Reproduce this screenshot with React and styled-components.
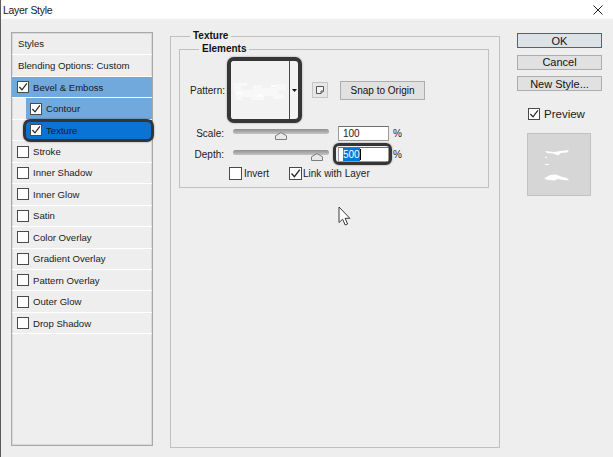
import React from "react";
import styled, { createGlobalStyle } from "styled-components";

const GlobalStyle = createGlobalStyle`
  html, body {
    margin: 0;
    padding: 0;
    background: #eeeeee;
  }
  body {
    font-family: "Liberation Sans", Arial, sans-serif;
    color: #1b1b1b;
  }
  #root {
    width: 613px;
    height: 457px;
  }
`;

const Window = styled.div`
  position: relative;
  width: 613px;
  height: 457px;
  box-sizing: border-box;
  border-left: 1px solid #5c5c5c;
  background: #eeeeee;
  display: flex;
  flex-direction: column;
  overflow: hidden;
`;

const TitleBar = styled.div`
  height: 19px;
  flex: none;
  background: #fff;
  display: flex;
  align-items: center;
  justify-content: space-between;
  padding: 0 10px 0 2px;
`;

const Title = styled.div`
  font-size: 10.5px;
  letter-spacing: -0.3px;
  color: #1a1a1a;
`;

const Body = styled.div`
  display: grid;
  grid-template-columns: 142px 330px 85px;
  column-gap: 17px;
  align-items: start;
  padding: 12px 0 0 10px;
`;

/* ---------- left list ---------- */

const StylesPanel = styled.div`
  margin-top: 1px;
  height: 414px;
  box-sizing: border-box;
  border: 1px solid #a9a9a9;
  box-shadow: inset 0 0 0 1px #d9d9d9;
`;

const Row = styled.div`
  height: ${(p) => p.$h || 21.45}px;
  box-sizing: border-box;
  border-bottom: 1px solid #fff;
  display: flex;
  font-size: 9.6px;
`;

const RowFill = styled.div`
  position: relative;
  flex: 1;
  display: flex;
  align-items: center;
  gap: 4px;
  margin-left: ${(p) => p.$indent || 0}px;
  padding-left: ${(p) => p.$pad}px;
  background: ${(p) =>
    p.$state === "sel" ? "#0b72d6" : p.$state === "on" ? "#72a9dd" : "transparent"};

  ${(p) =>
    p.$state === "sel" &&
    `
    &::after {
      content: "";
      position: absolute;
      top: -1px;
      bottom: -1.5px;
      left: -3px;
      right: -2px;
      border: 3px solid #353535;
      border-radius: 7px;
      box-shadow: 0 0 2px rgba(0, 0, 0, 0.4);
      pointer-events: none;
    }
  `}
`;

const CheckBox = styled.span`
  width: ${(p) => p.$size}px;
  height: ${(p) => p.$size}px;
  box-sizing: border-box;
  border: 1px solid #4a4a4a;
  background: #fff;
  display: inline-flex;
  align-items: center;
  justify-content: center;
  flex: none;
`;

function Check({ size = 12, checked }) {
  return (
    <CheckBox $size={size}>
      {checked && (
        <svg width={size - 2} height={size - 2} viewBox="0 0 10 10">
          <polyline points="1.4,5 4,7.9 8.9,1.4" fill="none" stroke="#262626" strokeWidth="1.2" />
        </svg>
      )}
    </CheckBox>
  );
}

const layers = [
  { name: "Bevel & Emboss", checked: true, state: "on" },
  { name: "Contour", checked: true, state: "on", sub: true },
  { name: "Texture", checked: true, state: "sel", sub: true },
  { name: "Stroke" },
  { name: "Inner Shadow" },
  { name: "Inner Glow" },
  { name: "Satin" },
  { name: "Color Overlay" },
  { name: "Gradient Overlay" },
  { name: "Pattern Overlay" },
  { name: "Outer Glow" },
  { name: "Drop Shadow" },
];

/* ---------- middle group ---------- */

const Group = styled.fieldset`
  margin: ${(p) => p.$m};
  padding: 0 0 ${(p) => p.$pb || 0}px 0;
  border: 1px solid #c0c0c0;
  min-width: 0;
  box-sizing: border-box;
  height: ${(p) => (p.$h ? `${p.$h}px` : "auto")};
`;

const Legend = styled.legend`
  font-weight: bold;
  font-size: 10px;
  line-height: 12px;
  padding: 0 3px;
  margin-left: 19px;
  color: #111;
`;

const PatternRow = styled.div`
  display: flex;
  align-items: center;
  height: 66px;
  margin-top: 2px;
  padding-left: 10px;
  font-size: 10px;
`;

const Label = styled.span`
  font-size: 10px;
  width: ${(p) => (p.$w ? `${p.$w}px` : "auto")};
  text-align: ${(p) => (p.$right ? "right" : "left")};
  flex: none;
`;

const SwatchFrame = styled.div`
  margin-left: 2px;
  width: 75px;
  height: 66px;
  box-sizing: border-box;
  border: 4px solid #363636;
  border-radius: 7px;
  box-shadow: 0 0 2px rgba(0, 0, 0, 0.4);
  display: flex;
  overflow: hidden;
  background: #f3f3f3;
`;

const SwatchPattern = styled.div`
  flex: 1;
  display: flex;
  border-right: 1px solid #4a4a4a;
`;

const SwatchArrow = styled.div`
  width: 8px;
  display: flex;
  align-items: center;
  justify-content: center;
`;

const IconButton = styled.div`
  margin-left: 10px;
  width: 16px;
  height: 16px;
  box-sizing: border-box;
  border: 1px solid #c6c6c6;
  background: #e6e6e6;
  display: flex;
  align-items: center;
  justify-content: center;
`;

const Button = styled.div`
  width: ${(p) => p.$w || 85}px;
  height: ${(p) => p.$h || 15}px;
  margin-left: ${(p) => p.$ml || 0}px;
  box-sizing: border-box;
  border: 1px solid ${(p) => (p.$primary ? "#0078d7" : "#adadad")};
  background: #e1e1e1;
  font-size: ${(p) => p.$fs || 11}px;
  color: #111;
  display: flex;
  align-items: center;
  justify-content: center;
  flex: none;
`;

const FieldRow = styled.div`
  display: flex;
  align-items: center;
  height: 16px;
  margin-top: ${(p) => p.$mt}px;
  padding-left: ${(p) => p.$pl || 0}px;
  font-size: 10px;
`;

const Slider = styled.div`
  position: relative;
  width: 96px;
  height: 16px;
  margin-left: 9px;
  flex: none;
`;

const Track = styled.div`
  margin-top: 4px;
  height: 5px;
  border-radius: 3px;
  background: linear-gradient(#8f8f8f, #c4c4c4);
`;

const Thumb = styled.svg`
  position: absolute;
  top: 7px;
  left: ${(p) => p.$at - 6}px;
`;

const NumField = styled.div`
  margin-left: 9px;
  width: 51px;
  height: 15px;
  box-sizing: border-box;
  border: 1px solid #9a9a9a;
  border-top-color: #6e6e6e;
  background: #fff;
  font-size: 10px;
  display: flex;
  align-items: center;
  padding-left: 4px;
  flex: none;
`;

const Highlight = styled.div`
  position: relative;
  display: flex;
  flex: none;

  &::after {
    content: "";
    position: absolute;
    top: -4px;
    bottom: -3px;
    left: 4px;
    right: -3px;
    border: 3px solid #353535;
    border-radius: 6px;
    box-shadow: 0 0 2px rgba(0, 0, 0, 0.4);
    pointer-events: none;
  }
`;

const Selected = styled.span`
  background: #0078d7;
  color: #fff;
  padding: 1px 0;
`;

const Caret = styled.span`
  width: 1px;
  height: 11px;
  background: #000;
`;

const Percent = styled.span`
  margin-left: 4px;
  font-size: 10px;
`;

const CheckLabel = styled.label`
  display: flex;
  align-items: center;
  gap: ${(p) => p.$gap || 2}px;
  margin-left: ${(p) => p.$ml || 0}px;
  font-size: ${(p) => p.$fs || 10}px;
`;

/* ---------- right column ---------- */

const Side = styled.div`
  margin-top: 2px;
  display: flex;
  flex-direction: column;
  gap: 6.5px;
`;

const PreviewToggle = styled.div`
  margin-top: 10px;
  padding-left: 11px;
`;

const PreviewBox = styled.div`
  margin: 7px 0 0 10px;
  width: 64px;
  height: 63px;
  box-sizing: border-box;
  border: 1px solid #c2c2c2;
  background: #d6d6d6;
`;

const Cursor = styled.svg`
  position: absolute;
  left: 337px;
  top: 206px;
`;

function PatternSwatch() {
  return (
    <SwatchFrame>
      <SwatchPattern>
        <svg width="57" height="58" viewBox="0 0 57 58">
          <rect width="57" height="58" fill="#f2f2f2" />
          <path d="M2 22h14v3h-6v4h12v-5h9v3h14v-4h10v6h-8v4h6v5h-11v-3h-9v4h-13v-3h-9v3h-6z" fill="#f8f8f8" />
          <path d="M5 31h8v2h-8zM26 33h6v3h-6zM40 24h5v2h-5z" fill="#fdfdfd" />
        </svg>
      </SwatchPattern>
      <SwatchArrow>
        <svg width="5" height="3" viewBox="0 0 5 3">
          <polygon points="0,0 5,0 2.5,3" fill="#111" />
        </svg>
      </SwatchArrow>
    </SwatchFrame>
  );
}

function SliderThumb({ at }) {
  return (
    <Thumb $at={at} width="12" height="8" viewBox="0 0 12 8">
      <polygon points="0.5,7.5 0.5,3.8 6,0.6 11.5,3.8 11.5,7.5" fill="#e9e9e9" stroke="#7c7c7c" />
    </Thumb>
  );
}

export default function App() {
  return (
    <>
      <GlobalStyle />
      <Window>
        <TitleBar>
          <Title>Layer Style</Title>
          <svg width="10" height="10" viewBox="0 0 10 10">
            <path d="M0.5 0.5L9.5 9.5M9.5 0.5L0.5 9.5" stroke="#222" strokeWidth="1" />
          </svg>
        </TitleBar>

        <Body>
          <StylesPanel>
            <Row $h={22}>
              <RowFill $pad={6}>Styles</RowFill>
            </Row>
            <Row $h={22}>
              <RowFill $pad={6}>Blending Options: Custom</RowFill>
            </Row>
            {layers.map((l) => (
              <Row key={l.name}>
                <RowFill $indent={l.sub ? 14 : 0} $pad={l.sub ? 4 : 5} $state={l.state}>
                  <Check checked={l.checked} />
                  {l.name}
                </RowFill>
              </Row>
            ))}
          </StylesPanel>

          <Group $m="-1px 0 0 0" $h={418}>
            <Legend>Texture</Legend>
            <Group $m="1px 10px 0 8px" $pb={6}>
              <Legend>Elements</Legend>
              <PatternRow>
                <Label>Pattern:</Label>
                <PatternSwatch />
                <IconButton>
                  <svg width="10" height="10" viewBox="0 0 10 10">
                    <path d="M1.5 1.5h7v4.5l-2.5 2.5h-4.5z" fill="#f4f4f4" stroke="#555" />
                    <path d="M8.5 6h-2.5v2.5" fill="none" stroke="#555" />
                  </svg>
                </IconButton>
                <Button $w={85} $h={19} $ml={12} $fs={10}>
                  Snap to Origin
                </Button>
              </PatternRow>

              <FieldRow $mt={2}>
                <Label $w={44} $right>
                  Scale:
                </Label>
                <Slider>
                  <Track />
                  <SliderThumb at={48} />
                </Slider>
                <NumField>100</NumField>
                <Percent>%</Percent>
              </FieldRow>

              <FieldRow $mt={5}>
                <Label $w={44} $right>
                  Depth:
                </Label>
                <Slider>
                  <Track />
                  <SliderThumb at={84} />
                </Slider>
                <Highlight>
                  <NumField>
                    <Selected>500</Selected>
                    <Caret />
                  </NumField>
                </Highlight>
                <Percent>%</Percent>
              </FieldRow>

              <FieldRow $mt={3} $pl={49}>
                <CheckLabel>
                  <Check size={13} />
                  Invert
                </CheckLabel>
                <CheckLabel $ml={20} $gap={1}>
                  <Check size={13} checked />
                  Link with Layer
                </CheckLabel>
              </FieldRow>
            </Group>
          </Group>

          <Side>
            <Button $primary>OK</Button>
            <Button>Cancel</Button>
            <Button>New Style...</Button>
            <PreviewToggle>
              <CheckLabel $gap={4} $fs={11.5}>
                <Check size={12} checked />
                Preview
              </CheckLabel>
            </PreviewToggle>
            <PreviewBox>
              <svg width="62" height="61" viewBox="0 0 62 61">
                <polygon points="17,17 26,18 33,17 41,16 39,18.5 33,19 30,21.5 25,19.5 19,19" fill="#fff" />
                <rect x="17" y="23" width="2" height="1" fill="#fff" />
                <rect x="17" y="30" width="4" height="1" fill="#fff" />
                <polygon points="22,41 28,40.5 33,42.5 39,44 41,46.5 35,46 30,45 26,46.5 20,46 16,44.5" fill="#fff" />
              </svg>
            </PreviewBox>
          </Side>
        </Body>

        <Cursor width="13" height="20" viewBox="0 0 13 20">
          <path
            d="M1 1L1 16.5L4.6 13.2L7.2 19L9.6 18L7.1 12.3L11.8 12.3Z"
            fill="#fff"
            stroke="#3a3a3a"
            strokeWidth="1"
            strokeLinejoin="round"
          />
        </Cursor>
      </Window>
    </>
  );
}
